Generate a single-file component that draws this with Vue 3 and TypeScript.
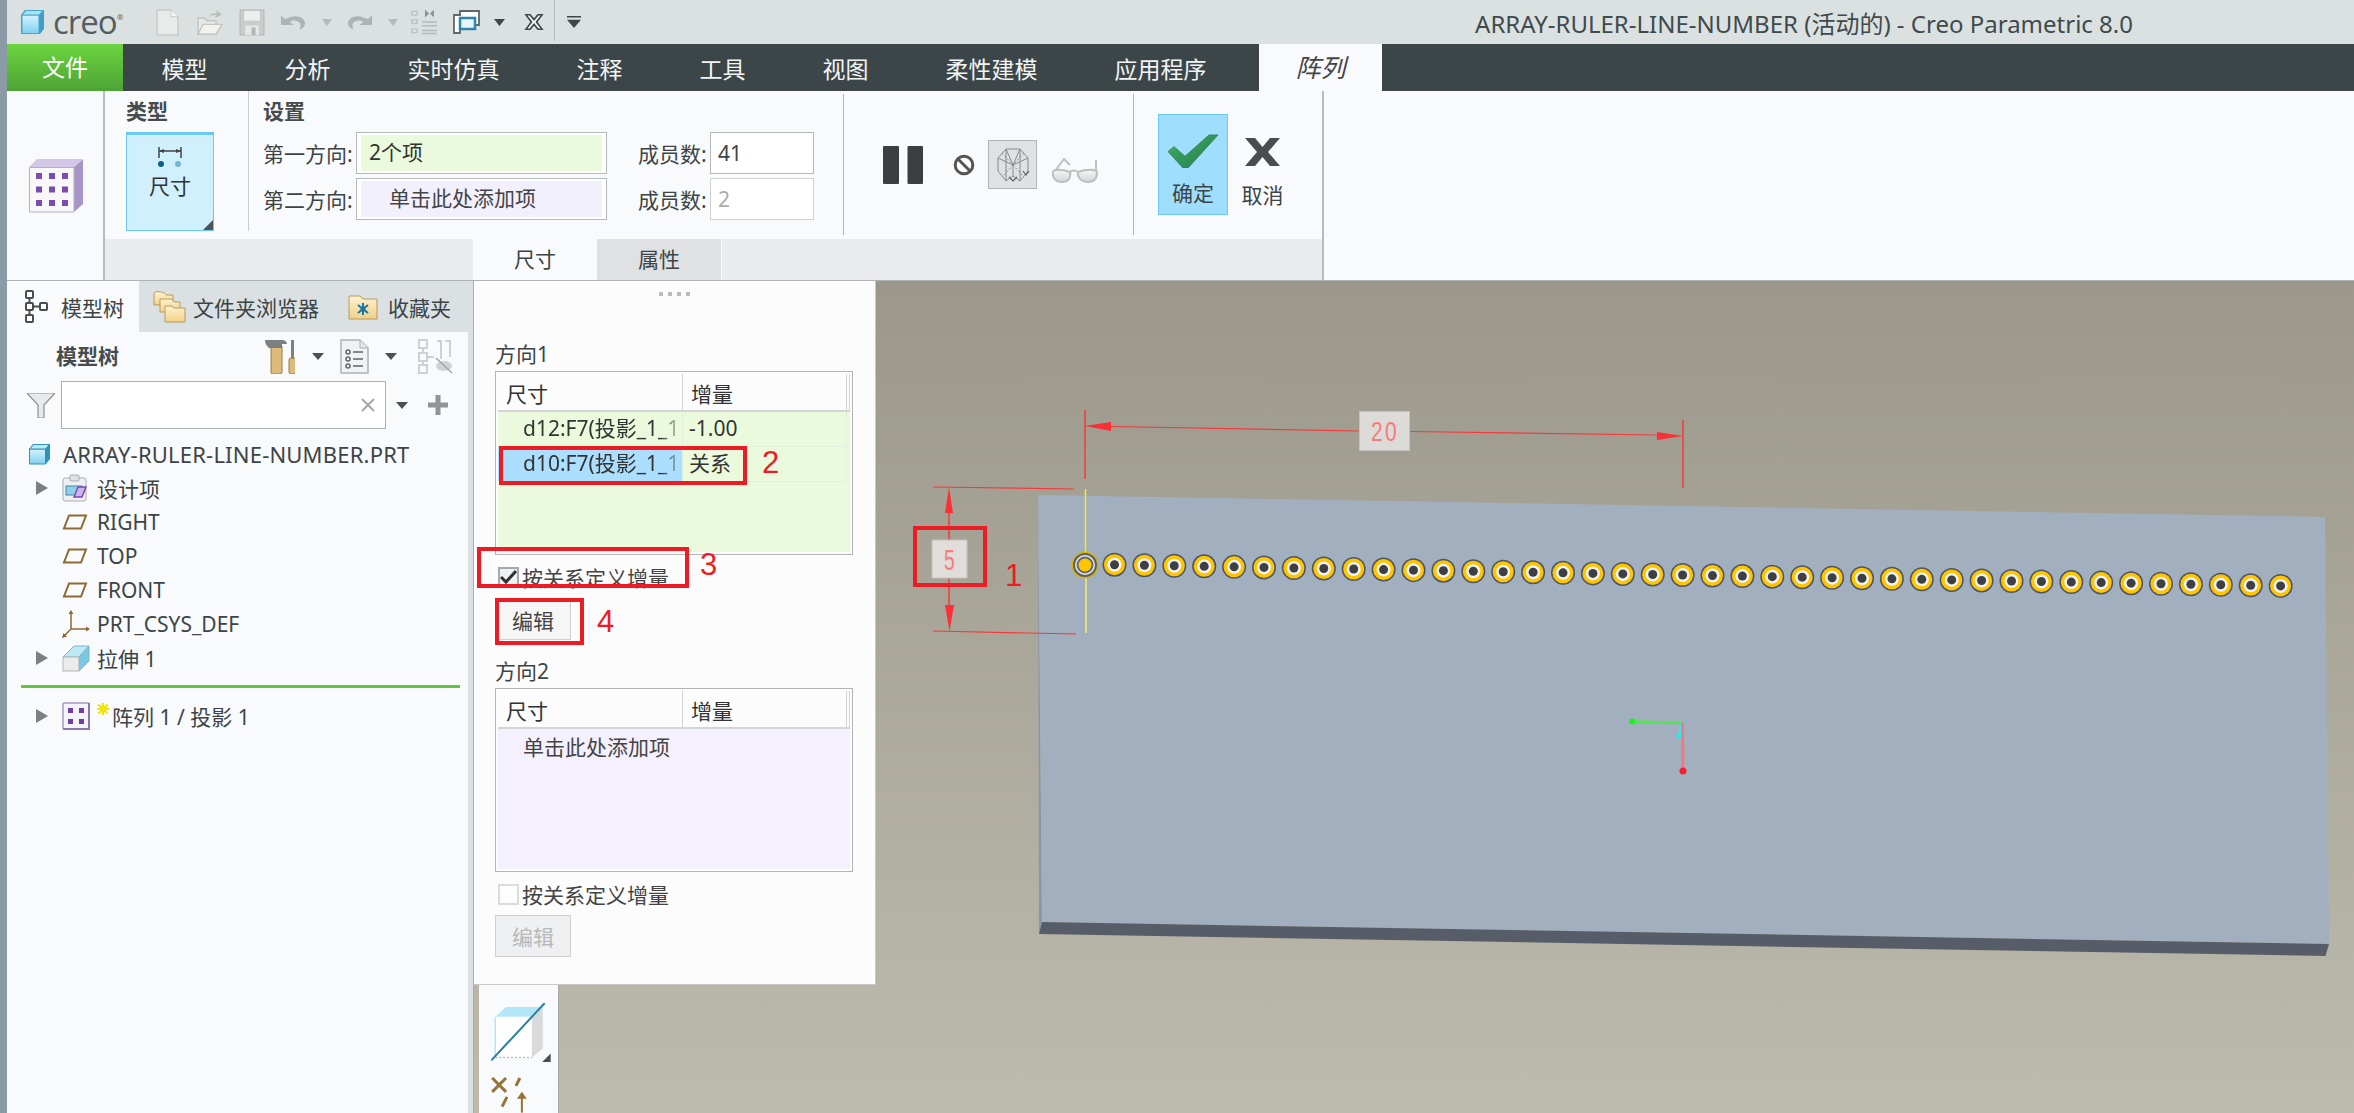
<template>
  <div class="app">
    <!-- 共用渐变 -->
    <svg class="defs" width="0" height="0">
      <defs>
        <linearGradient id="gCube" x1="0" y1="0" x2="0" y2="1"><stop offset="0" stop-color="#d6f4ff" /><stop offset="1" stop-color="#7fd0f0" /></linearGradient>
        <linearGradient id="gFolder" x1="0" y1="0" x2="0" y2="1"><stop offset="0" stop-color="#fff3cf" /><stop offset="1" stop-color="#f0d08a" /></linearGradient>
        <linearGradient id="gOk" x1="0" y1="0" x2="1" y2="1"><stop offset="0" stop-color="#c8e030" /><stop offset="0.3" stop-color="#34a05c" /><stop offset="1" stop-color="#2a7a50" /></linearGradient>
        <linearGradient id="gGlass" x1="0" y1="0" x2="0" y2="1"><stop offset="0" stop-color="#f6f7f7" /><stop offset="1" stop-color="#d3d6d6" /></linearGradient>
        <linearGradient id="gFade" x1="0" y1="0" x2="0" y2="1"><stop offset="0" stop-color="#2033b0" /><stop offset="1" stop-color="#7f8fb0" /></linearGradient>
      </defs>
    </svg>

    <div class="edge"></div>

    <div class="window">
      <!-- 标题栏 -->
      <header class="titlebar">
        <svg class="q-logo" width="25" height="26" viewBox="0 0 25 26">
          <path d="M5 1H24V20L20 25H1V6Z" fill="#3f9fc6" />
          <path d="M2 6H19V24.500H2Z" fill="url(#gCube)" stroke="#4ba6cb" />
          <path d="M2 6L6 1.500H23L19 6Z" fill="#a6e3f5" stroke="#4ba6cb" />
        </svg>
        <span class="creo">creo<sup>®</sup></span>
        <svg class="q-new" width="23" height="27" viewBox="0 0 23 28" preserveAspectRatio="none"><path d="M1 1H15L22 8V27H1Z" fill="#e9ebea" stroke="#c6caca" stroke-width="1.500" /><path d="M15 1V8H22" fill="#f6f6f6" stroke="#c6caca" /></svg>
        <svg class="q-open" width="28" height="27" viewBox="0 0 28 30" preserveAspectRatio="none"><path d="M3 28V10H10L12 13H21V28Z" fill="#e8e9e6" stroke="#c3c6c3" stroke-width="1.500" /><path d="M3 28L8 17H27L21 28Z" fill="#f1f1ee" stroke="#c3c6c3" stroke-width="1.500" /><path d="M14 9C15 5 19 4 22 5L21 1L27 6L20 10L21 7C18 6 16 7 14 9Z" fill="#b8bcba" /></svg>
        <svg class="q-save" width="26" height="27" viewBox="0 0 25 28" preserveAspectRatio="none"><path d="M1 1H24V27H1Z" fill="#c8cccc" stroke="#b3b8b8" /><path d="M5 2H20V12H5Z" fill="#edefef" /><path d="M6 17H19V27H6Z" fill="#e6e8e8" /><path d="M12 19H16V27H12Z" fill="#b3b8b8" /></svg>
        <svg class="q-undo" width="27" height="18" viewBox="0 0 28 24" preserveAspectRatio="none"><path d="M10 7C17 3 26 7 26 15C26 19 23 22 20 23C22 19 22 14 18 12C15 10 12 11 10 13L14 17H1V4L5 9Z" transform="translate(0,-1)" fill="#aeb3b3" /></svg>
        <svg class="q-dd" width="10" height="7" viewBox="0 0 10 8" preserveAspectRatio="none"><path d="M0 0H10L5 8Z" fill="#b5baba" /></svg>
        <svg class="q-redo" width="27" height="18" viewBox="0 0 28 24" preserveAspectRatio="none"><path d="M18 7C11 3 2 7 2 15C2 19 5 22 8 23C6 19 6 14 10 12C13 10 16 11 18 13L14 17H27V4L23 9Z" transform="translate(0,-1)" fill="#aeb3b3" /></svg>
        <svg class="q-dd2" width="10" height="7" viewBox="0 0 10 8" preserveAspectRatio="none"><path d="M0 0H10L5 8Z" fill="#b5baba" /></svg>
        <svg class="q-list" width="26" height="26" viewBox="0 0 26 34" preserveAspectRatio="none"><g fill="none" stroke="#bcc0c0" stroke-width="1.500"><rect x="1" y="3" width="5" height="5" /><rect x="1" y="14" width="5" height="5" /><rect x="1" y="26" width="5" height="5" /></g><path d="M11 17H26M11 22H26M11 28H26M11 32H26" stroke="#b5b9b9" stroke-width="2" /><path d="M14 1L18 6L14 11ZM23 1L19 6L23 11Z" fill="#8c9292" /></svg>
        <svg class="q-win" width="27" height="24" viewBox="0 0 27 24"><path d="M1 5H7V1H26V15H21V19H7V23H1Z" fill="#fff" stroke="#5f6769" stroke-width="1.800" /><path d="M7 8H22V19H7Z" fill="#e6f6fc" stroke="#2b87ad" stroke-width="2.500" /></svg>
        <svg class="q-dd3" width="11" height="7" viewBox="0 0 11 8" preserveAspectRatio="none"><path d="M0 0H11L5.500 8Z" fill="#3e4749" /></svg>
        <svg class="q-x" width="20" height="16" viewBox="0 0 20 20" preserveAspectRatio="none"><path d="M2 1H6L10 7L14 1H18L12.500 10L18 19H14L10 13L6 19H2L7.500 10Z" fill="#fff" stroke="#3f484a" stroke-width="1.800" /></svg>
        <span class="q-sep"></span>
        <svg class="q-more" width="14" height="12" viewBox="0 0 14 16" preserveAspectRatio="none"><path d="M0 0H14V2H0ZM0 5H14L7 16Z" fill="#3e4749" /></svg>
        <span class="title-text">ARRAY-RULER-LINE-NUMBER (活动的) - Creo Parametric 8.0</span>
      </header>

      <!-- 菜单 -->
      <nav class="menubar">
        <span class="menu-file">文件</span>
        <span v-for="m in menus" :key="m" class="menu-item">{{ m }}</span>
        <span class="menu-active">阵列</span>
      </nav>

      <!-- 功能区 -->
      <section class="ribbon">
        <div class="rb-feature">
          <svg width="54" height="54" viewBox="0 0 54 54">
            <path d="M45 8L54 0V45L45 53Z" fill="#a794c8" />
            <path d="M0 8L8 0H54L45 8Z" fill="#d2c7e6" />
            <path d="M0.500 8.500H45V53H0.500Z" fill="#f8f8f8" stroke="#b7b0c4" />
            <g fill="#7a4bb0">
              <rect v-for="c in featureDots" :key="c.k" :x="c.x" :y="c.y" width="6" height="6" />
            </g>
          </svg>
        </div>

        <div class="rb-main">
          <div class="rb-groups">
            <div class="group-type">
              <div class="group-label">类型</div>
              <div class="type-btn">
                <svg width="24" height="21" viewBox="0 0 24 21">
                  <path d="M1 1V12M23 1V12M1 5H23" stroke="#444" stroke-width="1.500" fill="none" />
                  <path d="M1 5L6 3V7ZM23 5L18 3V7Z" fill="#444" />
                  <circle cx="3" cy="18" r="3" fill="#0d5f86" />
                  <circle cx="20" cy="18" r="3" fill="#72b4d0" />
                </svg>
                <span>尺寸</span>
                <i class="corner"></i>
              </div>
            </div>

            <div class="group-set">
              <div class="group-label">设置</div>
              <div class="set-grid">
                <span class="set-name">第一方向:</span>
                <div class="field"><div class="field-in green">2个项</div></div>
                <span></span>
                <span class="set-name">成员数:</span>
                <div class="num">41</div>
                <span class="set-name">第二方向:</span>
                <div class="field"><div class="field-in lilac">单击此处添加项</div></div>
                <span></span>
                <span class="set-name">成员数:</span>
                <div class="num off">2</div>
              </div>
            </div>

            <div class="group-act">
              <svg width="40" height="38" viewBox="0 0 40 38"><rect width="16" height="38" rx="1" fill="#3b3f40" /><rect x="24.500" width="15.500" height="38" rx="1" fill="#3b3f40" /></svg>
              <svg class="act-ban" width="22" height="22" viewBox="0 0 22 22"><circle cx="11" cy="11" r="8.800" fill="#fff" stroke="#555" stroke-width="3" /><path d="M5 5L17 17" stroke="#555" stroke-width="3" /></svg>
              <div class="act-wire">
                <svg width="36" height="36" viewBox="0 0 36 36"><g fill="none" stroke="#878a8a" stroke-width="1"><path d="M3 11L11 2H25L33 11V24L25 34L18 29L11 34L3 24Z" /><path d="M3 11L18 18L33 11M18 18V29M11 2L18 18L25 2M11 2V34M25 2V34" /><path d="M7 6L29 30M29 6L7 30" stroke-dasharray="2 2" /></g><path d="M14 30L18 34L22 30M28 24L31 28L34 24" fill="none" stroke="#5f6263" stroke-width="1.200" /></svg>
              </div>
              <svg class="act-glass" width="46" height="26" viewBox="0 0 46 26"><g fill="url(#gGlass)" stroke="#bcc0c0" stroke-width="2"><path d="M1 15C1 12 10 12 18 15C19 20 17 25 10 25C3 25 0 20 1 15Z" /><path d="M26 15C34 12 44 12 45 15C45 20 43 25 36 25C29 25 25 20 26 15Z" /></g><path d="M18 15C20 13 24 13 26 15M3 14L12 2L18 8M44 14V3" fill="none" stroke="#bcc0c0" stroke-width="2" /></svg>
            </div>

            <div class="group-ok">
              <button class="ok-btn">
                <svg width="50" height="35" viewBox="0 0 50 36" preserveAspectRatio="none"><path d="M0 19L6 14L17 24L41 2H50L20 36H15Z" fill="url(#gOk)" stroke="#2f7d52" stroke-width="0.800" /></svg>
                <span>确定</span>
              </button>
              <button class="cancel-btn">
                <svg width="35" height="28" viewBox="0 0 35 28"><path d="M0 0H10L17.500 9L25 0H35L23 14L35 28H25L17.500 19L10 28H0L12 14Z" fill="#4a4d4e" /></svg>
                <span>取消</span>
              </button>
            </div>
          </div>
          <div class="rb-tabs">
            <span class="rb-tab on">尺寸</span>
            <span class="rb-tab">属性</span>
          </div>
        </div>
      </section>

      <div class="workspace">
        <!-- 左侧模型树 -->
        <aside class="side">
          <div class="side-tabs">
            <div class="s-tab active">
              <svg width="24" height="33" viewBox="0 0 24 33"><g fill="#fff" stroke="#4a4d4e" stroke-width="2"><rect x="1" y="1" width="7" height="7" rx="1" /><rect x="1" y="13" width="7" height="7" rx="1" /><rect x="15" y="13" width="7" height="7" rx="1" /><rect x="1" y="25" width="7" height="7" rx="1" /></g><path d="M4.500 8V13M4.500 20V25M8 16.500H15" stroke="#4a4d4e" stroke-width="2" /></svg>
              <span>模型树</span>
            </div>
            <div class="s-tab t2">
              <svg width="33" height="33" viewBox="0 0 33 33"><g fill="url(#gFolder)" stroke="#b89a5c"><path d="M1 15V3C1 1 12 1 13 5H20V15Z" /><path d="M7 22V9H19L21 12H27V22Z" /><path d="M12 32V16H19L21 18H32V32Z" /></g></svg>
              <span>文件夹浏览器</span>
            </div>
            <div class="s-tab t3">
              <svg width="30" height="26" viewBox="0 0 30 26"><path d="M1 25V2H12L15 5H29V25Z" fill="url(#gFolder)" stroke="#b89a5c" /><path d="M15 9V21M10 11L20 19M20 11L10 19" stroke="#1576a8" stroke-width="2" /><circle cx="15" cy="15" r="2.500" fill="#1576a8" /></svg>
              <span>收藏夹</span>
            </div>
          </div>

          <div class="side-body">
            <div class="tool-row">
              <span class="tool-title">模型树</span>
              <svg class="t-tools" width="30" height="35" viewBox="0 0 30 35"><rect x="6" y="6" width="11" height="29" rx="2" fill="#dcbb7b" stroke="#9a7c40" /><path d="M0 1H17C20 1 22 3 22 5H17V9H4C2 7 0 5 0 1Z" fill="#7b8082" /><rect x="26" y="1" width="3" height="18" fill="#7b8082" /><rect x="24" y="19" width="7" height="16" rx="2" fill="#dcbb7b" stroke="#9a7c40" /></svg>
              <svg class="t-dd" width="12" height="7" viewBox="0 0 12 7"><path d="M0 0H12L6 7Z" fill="#4c5052" /></svg>
              <svg class="t-doc" width="29" height="35" viewBox="0 0 29 35"><path d="M1 1H20L28 9V34H1Z" fill="#eff3f6" stroke="#aab3b8" stroke-width="1.500" /><path d="M20 1V9H28" fill="#dfe6ea" stroke="#aab3b8" /><g fill="none" stroke="#5e676b" stroke-width="1.500"><circle cx="8" cy="13" r="2" /><circle cx="8" cy="20" r="2" /><circle cx="8" cy="27" r="2" /></g><path d="M13 13H23M13 20H23M13 27H23" stroke="#5e676b" stroke-width="1.500" /></svg>
              <svg class="t-dd2" width="12" height="7" viewBox="0 0 12 7"><path d="M0 0H12L6 7Z" fill="#4c5052" /></svg>
              <svg class="t-hide" width="35" height="35" viewBox="0 0 35 35"><g fill="none" stroke="#ccd1d3" stroke-width="2"><rect x="1" y="1" width="8" height="8" /><rect x="1" y="14" width="8" height="8" /><rect x="1" y="26" width="8" height="8" /><path d="M5 9V14M5 22V26M9 18H16M19 2H23V20M27 2H32V18" /></g><ellipse cx="26" cy="27" rx="8" ry="5" fill="#cfd3d5" /><path d="M18 19L34 34" stroke="#9fa4a6" stroke-width="1.500" /></svg>
            </div>

            <div class="search-row">
              <svg width="28" height="25" viewBox="0 0 28 25"><path d="M0 0H28L17 12V25H11V12Z" fill="#e8e9ea" stroke="#8c9193" stroke-width="1.200" /></svg>
              <div class="search">
                <svg width="14" height="14" viewBox="0 0 14 14"><path d="M1 1L13 13M13 1L1 13" stroke="#a3a8aa" stroke-width="2" /></svg>
              </div>
              <svg class="s-dd" width="12" height="7" viewBox="0 0 12 7"><path d="M0 0H12L6 7Z" fill="#4c5052" /></svg>
              <svg class="s-plus" width="20" height="20" viewBox="0 0 20 20"><path d="M7.500 0H12.500V7.500H20V12.500H12.500V20H7.500V12.500H0V7.500H7.500Z" fill="#8f9496" /></svg>
            </div>

            <div class="tree">
              <div class="tree-root">
                <svg width="23" height="22" viewBox="0 0 23 22"><path d="M5 1H22V16L18 21H1V6Z" fill="#2d93bd" /><path d="M1.500 6H17.500V21H1.500Z" fill="url(#gCube)" stroke="#2d93bd" /><path d="M1.500 6L5.500 1.500H21.500L17.500 6Z" fill="#b9e9f7" stroke="#2d93bd" /></svg>
                <span>ARRAY-RULER-LINE-NUMBER.PRT</span>
              </div>

              <div class="tree-row">
                <i class="twist"></i>
                <span class="ico">
                  <svg width="25" height="28" viewBox="0 0 25 28"><rect x="1" y="4" width="23" height="23" rx="2" fill="#eef0f1" stroke="#a8afb2" /><rect x="8" y="1" width="9" height="6" rx="1" fill="#dfe3e4" stroke="#a8afb2" /><rect x="4" y="12" width="16" height="9" fill="#8fd0ec" stroke="#3a88aa" /><path d="M12 23L16 13H24L20 23Z" fill="#cbb6e6" stroke="#7a4bb0" stroke-width="1.500" /></svg>
                </span>
                <span>设计项</span>
              </div>
              <div v-for="p in planes" :key="p" class="tree-row">
                <i class="twist none"></i>
                <span class="ico">
                  <svg width="26" height="16" viewBox="0 0 26 16"><path d="M7 1.500H24L19 14.500H2Z" fill="none" stroke="#8c6a34" stroke-width="2" /></svg>
                </span>
                <span>{{ p }}</span>
              </div>
              <div class="tree-row">
                <i class="twist none"></i>
                <span class="ico">
                  <svg width="28" height="28" viewBox="0 0 28 28"><path d="M9 1V19M9 19H27M9 19L1 27" stroke="#8c6a34" stroke-width="1.500" fill="none" /><path d="M9 0L6.500 4H11.500ZM28 19L24 16.500V21.500ZM0 28L5 26.500L1.500 23Z" fill="#8c6a34" /></svg>
                </span>
                <span>PRT_CSYS_DEF</span>
              </div>
              <div class="tree-row">
                <i class="twist"></i>
                <span class="ico">
                  <svg width="28" height="28" viewBox="0 0 28 28"><path d="M1 13L12 2H27L17 13Z" fill="#bfe8f5" stroke="#7fb6c8" /><path d="M17 13L27 2V17L17 27Z" fill="#79c7e2" stroke="#7fb6c8" /><rect x="1" y="13" width="16" height="14" fill="#ececec" stroke="#b3b6b7" /></svg>
                </span>
                <span>拉伸 1</span>
              </div>

              <div class="insert-line"></div>

              <div class="tree-row pattern">
                <i class="twist"></i>
                <span class="ico">
                  <svg width="28" height="28" viewBox="0 0 28 28"><rect x="1" y="1" width="26" height="26" rx="1" fill="#f5f3f8" stroke="#a79bc0" stroke-width="1.500" /><path d="M27 1V27H1" fill="none" stroke="#8a78ad" stroke-width="2" /><g fill="#6b3fa8"><rect x="6" y="6" width="5" height="5" /><rect x="17" y="6" width="5" height="5" /><rect x="6" y="17" width="5" height="5" /><rect x="17" y="17" width="5" height="5" /></g></svg>
                </span>
                <svg class="star" width="12" height="12" viewBox="0 0 12 12"><path d="M6 0V12M0 6H12M1.500 1.500L10.500 10.500M10.500 1.500L1.500 10.500" stroke="#efe600" stroke-width="2.200" /></svg>
                <span>阵列 1 / 投影 1</span>
              </div>
            </div>
          </div>
        </aside>

        <main class="viewport">
          <!-- 模型图形：坐标即画布位置 -->
          <svg class="scene" width="1881" height="832" viewBox="473 281 1881 832">
            <path d="M1037 495L1041 922L1038 934Z" fill="#8797a6" />
            <path d="M1037 495L2324 517L2328 944L1041 922Z" fill="#a1afbe" />
            <path d="M1041 922L2328 944L2324.500 956L1038 934Z" fill="#575d68" />

            <!-- 基准线 -->
            <path d="M1083 495V525" stroke="url(#gFade)" stroke-width="2" />
            <path d="M1084.500 489V552" stroke="#f8ec10" stroke-width="1.500" />
            <path d="M1085 578V633" stroke="#e4dd84" stroke-width="2" />

            <!-- 阵列孔 -->
            <g v-for="p in pins" :key="p.x">
              <circle :cx="p.x" :cy="p.y" r="12" fill="#4c5566" />
              <circle :cx="p.x" :cy="p.y" r="10.500" fill="#ffc600" />
              <circle :cx="p.x" :cy="p.y" r="7" fill="#f2f3f5" />
              <circle :cx="p.x" :cy="p.y" r="4.500" fill="#3e3f42" />
            </g>
            <circle cx="1084" cy="565" r="13.500" fill="#d8b400" />
            <circle cx="1084" cy="565" r="12" fill="#5a6068" />
            <circle cx="1084" cy="565" r="10" fill="#e8e9ea" />
            <circle cx="1084" cy="565" r="8.500" fill="#666a70" />
            <circle cx="1084" cy="565" r="6.500" fill="#ffc600" />

            <!-- 尺寸 20 -->
            <g stroke="#f43a3a" fill="none">
              <path d="M1084 410V479" stroke-width="1.500" />
              <path d="M1110 426.500L1358 431" stroke-width="1.200" />
              <path d="M1409 431.500L1656 435" stroke-width="1.200" />
              <path d="M1682 420V488" stroke-width="1.500" />
              <path d="M932 487L1073 489" stroke-width="1.200" />
              <path d="M932 631L1075 634" stroke-width="1.200" />
              <path d="M948 513V540M948 578V605" stroke-width="1.500" />
            </g>
            <path d="M1084 426L1110 422V431Z" fill="#fb2f36" />
            <path d="M1682 436L1656 432V440Z" fill="#fb2f36" />
            <path d="M948 487L952 513H944Z" fill="#fb2f36" />
            <path d="M948.500 631L953 605H944Z" fill="#fb2f36" />

            <rect x="1358.500" y="411.500" width="50" height="39" fill="#dcdbd7" stroke="#c3c2bd" />
            <text class="dim-text" transform="translate(1384,441) scale(0.78,1)" letter-spacing="3" text-anchor="middle">20</text>
            <rect x="931" y="540" width="35" height="38" fill="#dfdeda" stroke="#c3c2bd" />
            <text class="dim-text" transform="translate(948.500,570) scale(0.72,1.1)" text-anchor="middle">5</text>

            <!-- 坐标系 -->
            <path d="M1631 721.500L1681 723" stroke="#4ee84e" stroke-width="2.500" />
            <path d="M1681 723L1678 736" stroke="#3fe4e8" stroke-width="2.500" />
            <path d="M1681.500 723L1682 771" stroke="#f07a84" stroke-width="3" />
            <circle cx="1631" cy="721.500" r="3" fill="#22ee22" />
            <circle cx="1678" cy="736" r="2.500" fill="#22eeee" />
            <circle cx="1682" cy="771" r="3.500" fill="#f62030" />
          </svg>

          <!-- 截面工具条，压在图形上 -->
          <div class="left-tools">
            <svg class="lt-a" width="60" height="60" viewBox="0 0 60 60">
              <path d="M4 14L15 4H52V46L41 55H4Z" fill="#fff" />
              <path d="M4 14L15 4H52L41 14Z" fill="#b4e6fa" />
              <path d="M41 14L52 4V46L41 55Z" fill="#d8dadb" />
              <path d="M4 55H41" stroke="#b9bcbd" stroke-width="1.500" stroke-dasharray="2 2" />
              <path d="M4 14V55" stroke="#b4e6fa" stroke-width="1.500" />
              <path d="M0 58L54 0" stroke="#2a80a4" stroke-width="2" />
              <path d="M51 60H60V51Z" fill="#4a4d4e" />
            </svg>
            <svg class="lt-b" width="38" height="36" viewBox="0 0 38 36">
              <path d="M1 1L15 15M15 1L1 15M29 1L25 9M16 20L11 30" stroke="#957438" stroke-width="3" fill="none" />
              <path d="M31 16V36" stroke="#957438" stroke-width="2" />
              <path d="M31 15L26 22H36Z" fill="#957438" />
            </svg>
          </div>

          <!-- 尺寸面板 -->
          <div class="panel">
            <div class="handle"><i></i><i></i><i></i><i></i></div>
            <div class="dir-label first">方向1</div>
            <div class="dim-table">
              <div class="dim-head"><span class="c1">尺寸</span><span class="c2">增量</span><i class="c3"></i></div>
              <div class="dim-body green">
                <div class="dim-row">
                  <div class="cell-name"><span>d12:F7(投影_1_1</span></div>
                  <div class="cell-val">-1.00</div>
                </div>
                <div class="dim-row">
                  <div class="cell-name sel"><span>d10:F7(投影_1_1</span></div>
                  <div class="cell-val">关系</div>
                </div>
              </div>
            </div>
            <label class="check"><span class="box on">
              <svg width="17" height="16" viewBox="0 0 17 16"><path d="M1 8L6 13L16 2" fill="none" stroke="#2e3233" stroke-width="3" /></svg>
            </span>按关系定义增量</label>
            <button class="edit">编辑</button>

            <div class="dir-label">方向2</div>
            <div class="dim-table">
              <div class="dim-head"><span class="c1">尺寸</span><span class="c2">增量</span><i class="c3"></i></div>
              <div class="dim-body lilac">
                <div class="add-row">单击此处添加项</div>
              </div>
            </div>
            <label class="check second"><span class="box"></span>按关系定义增量</label>
            <button class="edit disabled">编辑</button>
          </div>
        </main>
      </div>
    </div>

    <!-- 标注框和序号 -->
    <div class="mark m1"></div>
    <div class="mark m2"></div>
    <div class="mark m3"></div>
    <div class="mark m4"></div>
    <span class="num-mark n1">1</span>
    <span class="num-mark n2">2</span>
    <span class="num-mark n3">3</span>
    <span class="num-mark n4">4</span>
  </div>
</template>

<script setup lang="ts">
const menus: string[] = ['模型', '分析', '实时仿真', '注释', '工具', '视图', '柔性建模', '应用程序']
const planes: string[] = ['RIGHT', 'TOP', 'FRONT']

// 图标里 3x3 的小方块
const featureDots = [0, 1, 2].flatMap((r) =>
  [0, 1, 2].map((c) => ({ k: `${r}-${c}`, x: 7 + c * 13, y: 14 + r * 13.5 }))
)

// 第一个孔单独画，其余 40 个沿板面略微下斜
const pins = Array.from({ length: 40 }, (_, i) => ({
  x: 1113.5 + i * 29.9,
  y: 564.7 + i * 0.543
}))
</script>

<style scoped>
.app {
  position: relative;
  display: flex;
  width: 2354px;
  height: 1113px;
  overflow: hidden;
  background: #f8fafc;
  color: #3d4446;
  font-family: "Noto Sans", "Noto Sans CJK SC", sans-serif;
  font-size: 21px;
}

.defs {
  position: absolute;
}

.edge {
  width: 7px;
  flex: none;
  background: #8b9ba6;
}

.window {
  flex: 1;
  min-width: 0;
  display: flex;
  flex-direction: column;
}

/* 标题栏 */
.titlebar {
  display: flex;
  align-items: center;
  height: 44px;
  flex: none;
  padding-left: 13px;
  background: #dbe1e1;
}

.creo {
  margin-left: 8px;
  width: 69px;
  color: #545e60;
  font-family: "Open Sans", sans-serif;
  font-size: 33px;
  line-height: 44px;
  letter-spacing: -1px;
  white-space: nowrap;
}

.creo sup {
  font-size: 8px;
  vertical-align: 14px;
  line-height: 0;
}

.q-new { margin-left: 34px; }
.q-open { margin-left: 16px; }
.q-save { margin-left: 16px; }
.q-undo { margin-left: 15px; }
.q-dd { margin-left: 15px; }
.q-redo { margin-left: 14px; }
.q-dd2 { margin-left: 15px; }
.q-list { margin-left: 13px; }
.q-win { margin-left: 16px; }
.q-dd3 { margin-left: 14px; }
.q-x { margin-left: 19px; }
.q-more { margin-left: 12px; }

.q-sep {
  width: 1px;
  height: 41px;
  margin-left: 10px;
  margin-top: -3px;
  background: #b4babb;
}

.title-text {
  margin-left: auto;
  padding-right: 221px;
  color: #3f4a4c;
  font-size: 24px;
  white-space: nowrap;
}

/* 菜单 */
.menubar {
  display: flex;
  align-items: center;
  height: 47px;
  flex: none;
  background: #3c4649;
  color: #fff;
  font-size: 23px;
}

.menu-file {
  width: 116px;
  height: 47px;
  line-height: 47px;
  text-align: center;
  background: linear-gradient(180deg, #6cd43f 0%, #4da336 100%);
}

.menu-item {
  padding: 0 38.5px;
  color: #f2f4f4;
  white-space: nowrap;
}

.menu-active {
  width: 123px;
  height: 47px;
  margin-left: 14px;
  line-height: 47px;
  text-align: center;
  background: #f8fafc;
  color: #444;
  font-size: 25px;
  font-style: italic;
}

/* 功能区 */
.ribbon {
  display: flex;
  height: 190px;
  flex: none;
  border-bottom: 1px solid #aeb4b6;
  box-sizing: border-box;
}

.rb-feature {
  width: 96px;
  flex: none;
  padding: 68px 0 0 22px;
  box-sizing: border-box;
}

.rb-main {
  width: 1221px;
  flex: none;
  border-left: 2px solid #b7bbbd;
  border-right: 2px solid #b7bbbd;
  box-sizing: border-box;
  display: flex;
  flex-direction: column;
}

.rb-groups {
  display: flex;
  height: 148px;
  flex: none;
}

.group-label {
  height: 41px;
  line-height: 40px;
  font-weight: 700;
  color: #464c4e;
}

.group-type {
  width: 144px;
  flex: none;
  padding-left: 21px;
  box-sizing: border-box;
  border-right: 1px solid #c9cdcf;
  margin-bottom: 8px;
}

.type-btn {
  position: relative;
  width: 88px;
  height: 99px;
  box-sizing: border-box;
  border: 1px solid #6cc8f5;
  border-top: 3px solid #6cc8f5;
  background: #d0f0fe;
  display: flex;
  flex-direction: column;
  align-items: center;
  padding-top: 11px;
  color: #333;
}

.type-btn span {
  margin-top: 4px;
  line-height: 30px;
}

.corner {
  position: absolute;
  right: 0;
  bottom: 0;
  width: 0;
  height: 0;
  border-left: 10px solid transparent;
  border-bottom: 10px solid #4f5354;
}

.group-set {
  width: 595px;
  flex: none;
  padding-left: 14px;
  box-sizing: border-box;
  border-right: 1px solid #b0b5b7;
  margin-top: 3px;
  margin-bottom: 4px;
}

.group-set .group-label {
  margin-top: -3px;
}

.set-grid {
  display: grid;
  grid-template-columns: 93px 251px 31px 72px 104px;
  grid-template-rows: 42px 42px;
  row-gap: 4px;
  align-items: center;
}

.set-name {
  white-space: nowrap;
}

.field {
  height: 42px;
  box-sizing: border-box;
  border: 1px solid #b4b9b9;
  background: #fff;
  padding: 2px 4px;
}

.field-in {
  height: 36px;
  line-height: 35px;
  padding-left: 8px;
  color: #333;
}

.field-in.green {
  background: #ebfadc;
}

.field-in.lilac {
  background: #f3f0fd;
  padding-left: 28px;
  color: #444;
}

.num {
  height: 42px;
  line-height: 40px;
  box-sizing: border-box;
  border: 1px solid #b4b9b9;
  background: #fff;
  padding-left: 7px;
}

.num.off {
  border-color: #d0d3d4;
  color: #a8acad;
}

.group-act {
  width: 290px;
  flex: none;
  display: flex;
  align-items: center;
  padding-left: 39px;
  box-sizing: border-box;
  border-right: 1px solid #b0b5b7;
  margin-top: 3px;
  margin-bottom: 4px;
}

.act-ban { margin-left: 30px; }

.act-wire {
  width: 49px;
  height: 49px;
  box-sizing: border-box;
  margin-left: 13px;
  border: 1px solid #b2b4b5;
  background: #e0e1e2;
  display: flex;
  align-items: center;
  justify-content: center;
}

.act-glass {
  margin-left: 15px;
  margin-top: 10px;
}

.group-ok {
  display: flex;
  padding: 23px 0 0 24px;
}

.ok-btn,
.cancel-btn {
  height: 101px;
  box-sizing: border-box;
  padding: 18px 0 0;
  font: inherit;
  color: #3d4446;
  background: transparent;
  border: 1px solid transparent;
  display: flex;
  flex-direction: column;
  align-items: center;
}

.ok-btn {
  width: 70px;
  background: #9fdeff;
  border-color: #6cc8f5;
}

.cancel-btn {
  width: 69px;
  padding-top: 23px;
}

.ok-btn span {
  margin-top: 10px;
  line-height: 30px;
}

.cancel-btn span {
  margin-top: 14px;
  line-height: 30px;
}

.rb-tabs {
  display: flex;
  flex: 1;
  padding-left: 368px;
  background: #e9ebed;
}

.rb-tab {
  width: 124px;
  line-height: 41px;
  text-align: center;
  background: #dfe1e3;
  border-right: 1px solid #f8fafc;
}

.rb-tab.on {
  background: #f8fafc;
  border-right: 0;
}

/* 工作区 */
.workspace {
  flex: 1;
  min-height: 0;
  display: flex;
}

.side {
  width: 466px;
  flex: none;
  display: flex;
  flex-direction: column;
  background: #dbe1e3;
  border-right: 1px solid #a8adaf;
}

.side-tabs {
  display: flex;
  height: 51px;
  flex: none;
}

.s-tab {
  display: flex;
  align-items: center;
  white-space: nowrap;
}

.s-tab.active {
  width: 132px;
  padding-left: 18px;
  box-sizing: border-box;
  gap: 12px;
  background: #f8fafc;
}

.s-tab.t2 {
  margin-left: 14px;
  gap: 7px;
}

.s-tab.t3 {
  margin-left: 29px;
  gap: 10px;
}

.side-body {
  flex: 1;
  width: 461px;
  background: #f8fafc;
}

.tool-row {
  display: flex;
  align-items: center;
  height: 49px;
  padding-left: 49px;
}

.tool-title {
  width: 209px;
  margin-top: -3px;
  font-weight: 700;
  color: #464c4e;
}

.t-dd { margin-left: 17px; }
.t-doc { margin-left: 16px; }
.t-dd2 { margin-left: 16px; }
.t-hide { margin-left: 21px; }

.search-row {
  display: flex;
  align-items: center;
  height: 48px;
  padding-left: 20px;
}

.search {
  width: 325px;
  height: 48px;
  margin-left: 6px;
  box-sizing: border-box;
  border: 1px solid #a8b0b2;
  background: #fff;
  display: flex;
  align-items: center;
  justify-content: flex-end;
  padding-right: 10px;
}

.s-dd { margin-left: 10px; }
.s-plus { margin-left: 20px; }

.tree {
  margin-top: 8px;
}

.tree-root {
  display: flex;
  align-items: center;
  height: 34px;
  padding-left: 21px;
  gap: 12px;
  font-size: 22px;
  letter-spacing: 0.2px;
  white-space: nowrap;
}

.tree-row {
  display: flex;
  align-items: center;
  height: 34px;
  padding-left: 29px;
  white-space: nowrap;
}

.twist {
  width: 0;
  height: 0;
  margin-right: 14px;
  border-left: 12px solid #7b8082;
  border-top: 7px solid transparent;
  border-bottom: 7px solid transparent;
}

.twist.none {
  border-left-color: transparent;
}

.ico {
  width: 35px;
  flex: none;
  display: flex;
  align-items: center;
}

.insert-line {
  height: 3px;
  margin: 10px 8px 0 14px;
  background: #5fc63f;
}

.pattern {
  margin-top: 11px;
}

.star {
  margin-right: 3px;
  margin-top: -14px;
}

/* 图形区 */
.viewport {
  position: relative;
  flex: 1;
  min-width: 0;
  overflow: hidden;
  background: linear-gradient(180deg, #9b988b 0%, #bdbbae 100%);
}

.scene {
  display: block;
}

.dim-text {
  font-family: "Liberation Sans", sans-serif;
  font-size: 27px;
  fill: #f77c7c;
}

.left-tools {
  position: absolute;
  left: 5px;
  top: 0;
  bottom: 0;
  width: 80px;
  box-sizing: border-box;
  border-right: 1px solid #a6aaab;
  background: #f8fafc;
  display: flex;
  flex-direction: column;
  align-items: flex-start;
  padding: 722px 0 0 12px;
}

.lt-b {
  margin-top: 15px;
}

.panel {
  position: absolute;
  left: 0;
  top: 0;
  width: 402px;
  height: 704px;
  box-sizing: border-box;
  padding: 0 21px;
  background: #fcfcfc;
  border-right: 1px solid #c8c8c8;
  border-bottom: 1px solid #c8c8c8;
  display: flex;
  flex-direction: column;
  align-items: flex-start;
}

.handle {
  height: 26px;
  align-self: center;
  display: flex;
  align-items: center;
  gap: 5px;
}

.handle i {
  width: 4px;
  height: 4px;
  background: #bcbcbc;
}

.dir-label {
  height: 30px;
  line-height: 30px;
  margin-top: 16px;
  margin-bottom: 2px;
}

.dir-label.first {
  margin-top: 32px;
}

.dim-table {
  width: 358px;
  height: 184px;
  flex: none;
  box-sizing: border-box;
  border: 1px solid #b4b4b4;
  padding: 2px;
  display: flex;
  flex-direction: column;
}

.dim-head {
  display: flex;
  height: 38px;
  flex: none;
  box-sizing: border-box;
  border-bottom: 2px solid #d2d5d8;
  line-height: 41px;
  color: #333;
}

.dim-head span {
  box-sizing: border-box;
}

.c1 {
  width: 185px;
  padding-left: 8px;
  border-right: 1px solid #d2d5d8;
}

.c2 {
  width: 164px;
  padding-left: 8px;
  border-right: 1px solid #d2d5d8;
}

.c3 {
  flex: 1;
  border-right: 1px solid #d2d5d8;
}

.dim-body {
  flex: 1;
}

.dim-body.green {
  background: #ebfadc;
}

.dim-body.lilac {
  background: #f4f0fe;
}

.dim-row {
  display: flex;
  width: 349px;
  height: 35px;
  box-sizing: border-box;
  border-bottom: 1px solid #e2efdc;
  border-right: 1px solid #e2efdc;
  line-height: 33px;
  color: #333;
}

.cell-name {
  width: 185px;
  box-sizing: border-box;
  padding-left: 25px;
  overflow: hidden;
  white-space: nowrap;
  border-right: 1px solid #e2efdc;
}

.cell-name span {
  display: block;
  width: 156px;
  overflow: hidden;
  -webkit-mask-image: linear-gradient(90deg, #000 88%, rgba(0, 0, 0, 0.2) 100%);
  mask-image: linear-gradient(90deg, #000 88%, rgba(0, 0, 0, 0.2) 100%);
}

.cell-name.sel {
  background: #acdfff;
}

.cell-val {
  padding-left: 6px;
}

.add-row {
  padding-left: 25px;
  line-height: 36px;
  color: #444;
}

.check {
  display: flex;
  align-items: center;
  height: 24px;
  margin-top: 10px;
  padding-left: 3px;
  gap: 3px;
  color: #444;
}

.box {
  width: 21px;
  height: 21px;
  box-sizing: border-box;
  border: 2px solid #dadcdd;
  background: #fdfdfd;
  display: flex;
  align-items: center;
  justify-content: center;
}

.box.on {
  border-color: #a6a9ab;
  background: #f0f1f2;
}

.edit {
  width: 76px;
  height: 40px;
  flex: none;
  margin-top: 11px;
  padding: 0;
  box-sizing: border-box;
  font: inherit;
  color: #444;
  background: #f6f6f6;
  border: 1px solid #cfd0d1;
}

.edit.disabled {
  height: 42px;
  margin-top: 9px;
  color: #b6b8b9;
  background: #eef0f1;
}

/* 红色标注 */
.mark {
  position: absolute;
  box-sizing: border-box;
  border: 4px solid #ed1c24;
}

.m1 { left: 913px; top: 526px; width: 74px; height: 61px; }
.m2 { left: 499px; top: 446px; width: 248px; height: 39px; }
.m3 { left: 477px; top: 547px; width: 212px; height: 41px; }
.m4 { left: 495px; top: 598px; width: 89px; height: 47px; }

.num-mark {
  position: absolute;
  color: #ed1c24;
  font-family: "Liberation Sans", sans-serif;
  font-size: 31px;
  line-height: 34px;
}

.n1 { left: 1005px; top: 559px; }
.n2 { left: 762px; top: 446px; }
.n3 { left: 700px; top: 548px; }
.n4 { left: 597px; top: 605px; }
</style>
